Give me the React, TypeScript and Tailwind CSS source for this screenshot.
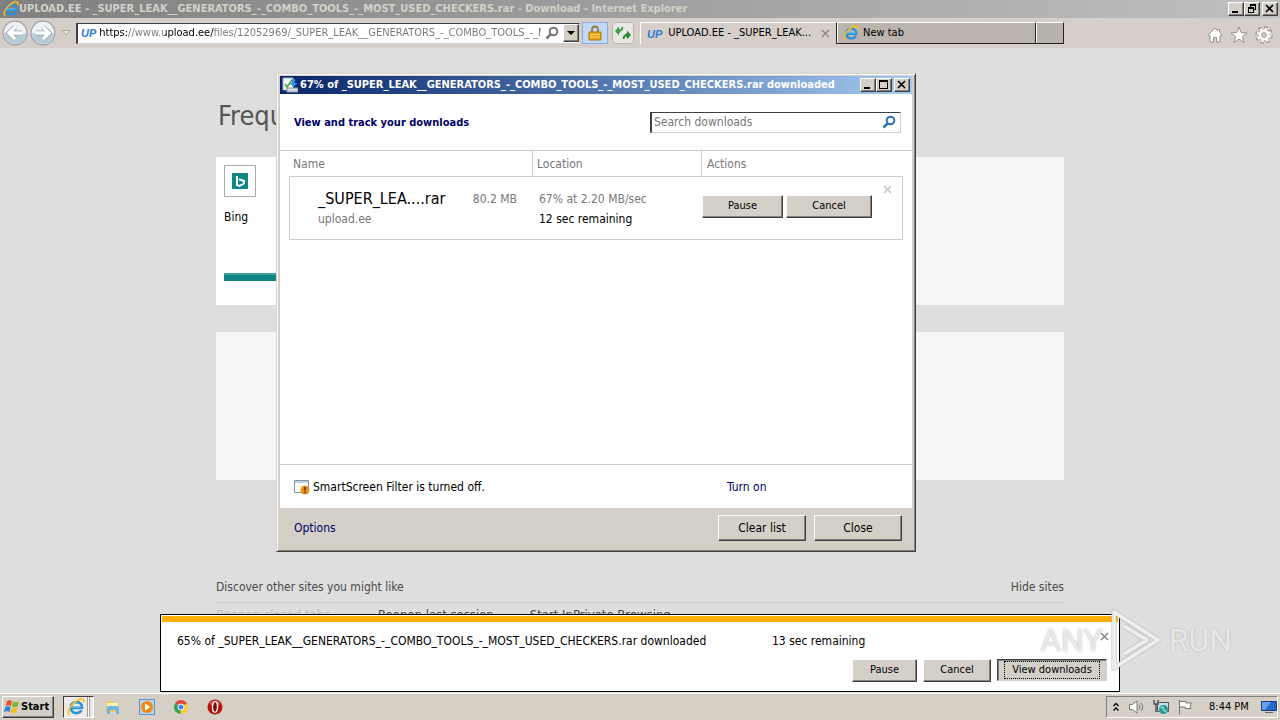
import { ReactNode } from "react";

const FILE_NAME = "_SUPER_LEAK__GENERATORS_-_COMBO_TOOLS_-_MOST_USED_CHECKERS.rar";

const raised =
  "border border-t-white border-l-white border-r-[#404040] border-b-[#404040] shadow-[inset_-1px_-1px_0_#808080] bg-[#d4d0c8]";

const IeIcon = ({ className = "size-4" }: { className?: string }) => (
  <svg viewBox="0 0 16 16" className={className} fill="none">
    <path
      d="M4.2 8.800h9.100c.2-3.200-1.800-5.200-4.900-5.200-3 0-5 2-5 4.900 0 3 2 4.900 5 4.900 2.100 0 3.600-.9 4.400-2.500"
      stroke="#2b92dc"
      strokeWidth="2.400"
    />
    <path d="M4.200 8h8" stroke="#6cc4f5" strokeWidth="1" />
    <path
      d="M2.400 14.600C.3 14.300.8 10.700 3.800 6.900 7 2.800 12.200-.2 14.300 1.200c.8.6.8 1.700.2 3"
      stroke="#f2c21b"
      strokeWidth="1.500"
    />
  </svg>
);

const UpIcon = () => (
  <span className="font-['Liberation_Sans'] text-[11px] font-bold italic leading-4 text-[#2a7bd6]">
    UP
  </span>
);

const MinimizeIcon = () => (
  <svg viewBox="0 0 12 10" className="h-2.5 w-3" shapeRendering="crispEdges">
    <path d="M2 7h6v2H2z" />
  </svg>
);

const MaximizeIcon = () => (
  <svg viewBox="0 0 12 10" className="h-2.5 w-3" shapeRendering="crispEdges">
    <path d="M1 0h9v9H1zM2 2v6h7V2z" fillRule="evenodd" />
  </svg>
);

const RestoreIcon = () => (
  <svg viewBox="0 0 12 10" className="h-2.5 w-3" shapeRendering="crispEdges">
    <path d="M4 0h6v6H8V5h1V2H5v1H4z" />
    <path d="M2 3h6v6H2zM3 5v3h4V5z" fillRule="evenodd" />
  </svg>
);

const CloseIcon = ({ className = "h-2.5 w-3" }: { className?: string }) => (
  <svg viewBox="0 0 12 10" className={className} stroke="currentColor" strokeWidth="1.600">
    <path d="M2 1l7 7M9 1L2 8" />
  </svg>
);

const WindowButton = ({ label, children }: { label: string; children: ReactNode }) => (
  <button
    aria-label={label}
    className={`flex h-3.5 w-4 items-center justify-center ${raised}`}
  >
    {children}
  </button>
);

const Button = ({ className, children }: { className: string; children: ReactNode }) => (
  <button className={`flex items-center justify-center ${raised} ${className}`}>
    {children}
  </button>
);

const NavButton = ({ label, flip }: { label: string; flip?: boolean }) => (
  <button aria-label={label}>
    <svg viewBox="0 0 28 28" className={`size-7 ${flip ? "-scale-x-100" : ""}`}>
      <circle cx="14" cy="14" r="12.500" fill="#9aa0a6" />
      <circle cx="14" cy="14" r="11.300" fill="#eef2f5" />
      <path d="M3 14a11 11 0 0 0 22 0q-11 4-22 0z" fill="#b7cad7" />
      <path
        d="M21 14H9M14 8l-6 6 6 6"
        fill="none"
        stroke="#8fa3b2"
        strokeWidth="5"
      />
      <path
        d="M21 14H9M14 8l-6 6 6 6"
        fill="none"
        stroke="#fff"
        strokeWidth="3.400"
      />
    </svg>
  </button>
);

const SearchIcon = ({ className }: { className: string }) => (
  <svg viewBox="0 0 14 14" className={className} fill="none" stroke="currentColor">
    <circle cx="8.500" cy="5.500" r="3.800" strokeWidth="2" />
    <path d="M5.800 8.200L1.500 12.500" strokeWidth="2.600" />
  </svg>
);

const TitleBar = () => (
  <header className="flex h-[18px] items-center justify-between bg-linear-to-r from-[#808080] to-[#c0c0c0] pl-[3px] pr-0.5">
    <div className="flex items-center">
      <IeIcon />
      <h1 className="whitespace-nowrap pt-px text-[11px] font-bold text-[#d4d0c8]">
        UPLOAD.EE - {FILE_NAME} - Download - Internet Explorer
      </h1>
    </div>
    <div className="flex">
      <WindowButton label="Minimize">
        <MinimizeIcon />
      </WindowButton>
      <WindowButton label="Restore">
        <RestoreIcon />
      </WindowButton>
      <span className="w-0.5" />
      <WindowButton label="Close">
        <CloseIcon />
      </WindowButton>
    </div>
  </header>
);

const Toolbar = () => (
  <nav className="flex h-[30px] items-center bg-[#d6cfc9] text-[11px]">
    <div className="flex w-[76px] items-center pl-px">
      <NavButton label="Back" />
      <NavButton label="Forward" flip />
      <button aria-label="Recent pages" className="pl-1">
        <svg viewBox="0 0 10 6" className="h-1.5 w-2.5">
          <path d="M1 .5h8L5 5z" fill="#e8e5e0" stroke="#aaa69e" />
        </svg>
      </button>
    </div>
    <div className="flex h-[21px] w-[504px] items-center border border-l-2 border-[#d4d0c8] border-t-[#404040] border-l-[#404040] bg-white pl-[3px]">
      <UpIcon />
      <input
        aria-label="Address"
        readOnly
        value="https://www.upload.ee/files/12052969/_SUPER_LEAK__GENERATORS_-_COMBO_TOOLS_-_MOST_USED_CHECKERS.rar.html"
        className="ml-[3px] min-w-0 flex-1 bg-[linear-gradient(90deg,#000_28px,#777_28px,#777_65px,#000_65px,#000_115px,#777_115px)] bg-clip-text text-[11px] text-transparent outline-none"
      />
      <button aria-label="Search" className="px-1 text-[#777]">
        <SearchIcon className="size-3.5" />
      </button>
      <button
        aria-label="Show address bar suggestions"
        className={`flex h-[18px] w-4 items-center justify-center ${raised}`}
      >
        <svg viewBox="0 0 8 4" className="h-1 w-2">
          <path d="M0 0h8L4 4z" />
        </svg>
      </button>
    </div>
    <button
      aria-label="Security report"
      className="ml-0.5 flex h-[22px] w-[26px] items-center justify-center border border-[#86aee0] bg-[#c3d9f5]"
    >
      <svg viewBox="0 0 14 16" className="h-4 w-3.5">
        <path d="M4 8V4.500a3 3 0 0 1 6 0V8" fill="none" stroke="#8e7a3c" strokeWidth="1.800" />
        <path d="M1 7h12v8H1z" fill="#e8a91c" stroke="#a97408" />
        <path d="M2 9.500h10M2 12h10" stroke="#ffd65c" />
      </svg>
    </button>
    <button
      aria-label="Refresh"
      className="ml-1 flex h-[22px] w-[22px] items-center justify-center rounded-sm border border-[#bab6b0] bg-[#e9e7e4]"
    >
      <svg viewBox="0 0 16 16" className="size-4" fill="none" strokeWidth="2">
        <path d="M0 6l4-4.500V4h1v4H4v2.500z" fill="#3f9a45" />
        <path d="M4 6q3 0 3.500-4" stroke="#3f9a45" />
        <path d="M16 10l-4 4.500V12h-1V8h1V5.500z" fill="#2c8a35" />
        <path d="M12 10q-3 0-3.500 4" stroke="#2c8a35" />
      </svg>
    </button>
    <div className="ml-1.5 flex h-[22px]">
      <div className="flex w-[196px] items-center border-l border-t border-white pl-1.5 pr-1">
        <UpIcon />
        <button className="ml-1.5 flex-1 truncate text-left">UPLOAD.EE - _SUPER_LEAK...</button>
        <button aria-label="Close tab" className="text-[#8c8c8c]">
          <CloseIcon />
        </button>
      </div>
      <button className="flex w-[200px] items-center border-x border-b border-t border-[#222] border-t-white bg-[#bab4ac] pl-1.5 shadow-[inset_1px_0_0_#fff]">
        <IeIcon />
        <span className="ml-1">New tab</span>
      </button>
      <button
        aria-label="Open new tab"
        className="w-7 border border-[#222] border-l-0 border-t-white bg-[#b8b3ac] shadow-[inset_1px_0_0_#fff]"
      />
    </div>
    <div className="ml-auto flex items-center gap-[7px] pr-[7px] pt-1">
      <button aria-label="Home">
        <svg viewBox="0 0 16 16" className="size-4" fill="#fff" stroke="#969089">
          <path d="M8 1L.8 8.300l1.300 1L3 8.600V15h3.500v-4.500h3V15H13V8.600l.9.700 1.300-1L12.500 5.500V2.500h-2v1z" />
        </svg>
      </button>
      <button aria-label="Favorites">
        <svg viewBox="0 0 18 18" className="size-[18px]" fill="#fff" stroke="#969089">
          <path d="M9 1l2.200 5.500 5.800.4-4.500 3.700 1.500 5.800L9 13.200l-5 3.200 1.500-5.800L1 6.900l5.800-.4z" />
        </svg>
      </button>
      <button aria-label="Tools">
        <svg viewBox="0 0 18 18" className="size-[18px]">
          <circle cx="9" cy="9" r="7" fill="none" stroke="#969089" strokeWidth="3.500" strokeDasharray="3 2.500" />
          <circle cx="9" cy="9" r="5" fill="#fff" stroke="#969089" strokeWidth="2.500" />
          <circle cx="9" cy="9" r="4.500" fill="none" stroke="#fff" strokeWidth="2" />
          <circle cx="9" cy="9" r="6.300" fill="none" stroke="#fff" strokeWidth="2.200" strokeDasharray="2.400 2.550" />
          <circle cx="9" cy="9" r="2.300" fill="#d6cfc9" stroke="#969089" />
        </svg>
      </button>
    </div>
  </nav>
);

const NewTabPage = () => (
  <main className="mx-auto w-[848px] max-w-full pt-[51px] text-xs text-[#4a4a4a]">
    <h2 className="w-[60px] overflow-hidden pl-0.5 text-[27px] leading-[34px] text-[#555]">
      Frequent
    </h2>
    <div className="mt-6 grid grid-cols-5 gap-[27px]">
      <a href="#bing" className="flex aspect-square flex-col bg-white pl-2 pt-2 text-black">
        <span className="flex size-8 items-center justify-center border border-[#aaa]">
          <svg viewBox="0 0 16 16" className="size-4">
            <path d="M0 0h16v16H0z" fill="#0f8784" />
            <path d="M5 3v9l2.500 1L12 10.500V8L7 6.300" fill="none" stroke="#fff" strokeWidth="2" />
          </svg>
        </span>
        <span className="mt-3">Bing</span>
        <span className="mb-6 mt-auto h-2 border-t-2 border-[#3ba39f] bg-[#0f8784]" />
      </a>
      {Array.from({ length: 9 }, (_, i) => (
        <div key={i} className="aspect-square bg-[#f6f6f6]" />
      ))}
    </div>
    <div className="mt-[98px] flex justify-between border-b border-[#cbcbcb] pb-1.5 leading-[18px]">
      <a href="#discover">Discover other sites you might like</a>
      <a href="#hide">Hide sites</a>
    </div>
    <div className="mt-[3px] flex gap-9 text-[13px] leading-[18px]">
      <span className="w-[126px] text-[#bbb]">Reopen closed tabs</span>
      <a href="#reopen">Reopen last session</a>
      <a href="#private">Start InPrivate Browsing</a>
    </div>
  </main>
);

const DownloadsDialog = () => (
  <section
    role="dialog"
    aria-label="View Downloads"
    className="absolute left-[276px] top-[25px] flex h-[479px] w-[640px] flex-col border border-[#d4d0c8] border-b-[#404040] border-r-[#404040] bg-[#d4d0c8] p-[3px] pt-0.5 shadow-[inset_1px_1px_0_#fff,inset_-1px_-1px_0_#808080]"
  >
    <div className="flex h-[18px] items-center justify-between bg-linear-to-r from-[#0a246a] to-[#a6caf0] px-0.5">
      <div className="flex items-center gap-0.5">
        <svg viewBox="0 0 16 16" className="size-4">
          <path d="M1 1h10v12H1z" fill="#f4f8f4" stroke="#9fb3c6" />
          <path d="M3 7l2 3 5-7" fill="none" stroke="#4aa84a" strokeWidth="1.600" />
          <path d="M10 2h3v4h2.500l-4 4-4-4H10z" fill="#2f8fe0" />
          <path d="M5 11h11v4H5z" fill="#d7dce0" stroke="#8895a0" />
        </svg>
        <h2 className="whitespace-nowrap text-[11px] font-bold text-white">
          67% of {FILE_NAME} downloaded
        </h2>
      </div>
      <div className="flex">
        <WindowButton label="Minimize">
          <MinimizeIcon />
        </WindowButton>
        <WindowButton label="Maximize">
          <MaximizeIcon />
        </WindowButton>
        <span className="w-0.5" />
        <WindowButton label="Close">
          <CloseIcon />
        </WindowButton>
      </div>
    </div>
    <div className="flex flex-1 flex-col bg-white text-xs">
      <div className="flex h-14 items-center justify-between pl-3.5 pr-[11px]">
        <h3 className="pt-0.5 text-[11px] font-bold text-[#000066]">
          View and track your downloads
        </h3>
        <label className="flex h-[21px] w-[251px] items-center border border-l-2 border-[#d4d0c8] border-l-[#404040] border-t-[#404040] pl-0.5 pr-1 text-[#2c6cb5]">
          <input
            aria-label="Search downloads"
            placeholder="Search downloads"
            className="min-w-0 flex-1 text-xs outline-none placeholder:text-[#777]"
          />
          <SearchIcon className="size-3.5" />
        </label>
      </div>
      <div className="border-t border-[#ccc] px-[9px]">
        <table className="w-full table-fixed border-separate border-spacing-0 text-left">
          <thead>
            <tr className="h-[25px] text-[#777] *:font-normal">
              <th className="w-[244px] border-r border-[#ccc] pl-1">Name</th>
              <th className="w-[169px] border-r border-[#ccc] pl-1">Location</th>
              <th className="pl-[5px]">Actions</th>
            </tr>
          </thead>
          <tbody>
            <tr className="h-16 *:border-y *:border-[#ccc]">
              <td className="border-l pl-7 pt-0.5">
                <div className="flex items-center justify-between pr-4">
                  <span className="text-base leading-5 text-black">_SUPER_LEA....rar</span>
                  <span className="text-[#777]">80.2 MB</span>
                </div>
                <div className="leading-5 text-[#777]">upload.ee</div>
              </td>
              <td className="pl-1.5 pt-0.5 leading-5">
                <div className="text-[#777]">67% at 2.20 MB/sec</div>
                <div>12 sec remaining</div>
              </td>
              <td className="border-r pb-1 pr-2">
                <div className="flex items-center gap-[3px] text-[11px]">
                  <Button className="h-[23px] w-[81px]">Pause</Button>
                  <Button className="h-[23px] w-[86px]">Cancel</Button>
                  <button aria-label="Remove" className="mb-8 ml-auto text-[#c4c4c4]">
                    <CloseIcon />
                  </button>
                </div>
              </td>
            </tr>
          </tbody>
        </table>
      </div>
      <div className="mt-auto flex h-11 items-center border-t border-[#ccc] pl-3.5">
        <svg viewBox="0 0 16 16" className="size-4">
          <path d="M.5 1.500h14v12H.5z" fill="#fff" stroke="#8a929a" />
          <path d="M1 2h13v2H1z" fill="#b9d5ee" />
          <circle cx="11" cy="11" r="4.500" fill="#e8921a" />
          <path d="M11 8v3.500M11 12.500V14" stroke="#5a3200" strokeWidth="1.600" />
        </svg>
        <span className="ml-[3px] w-[414px]">SmartScreen Filter is turned off.</span>
        <a href="#turn-on" className="text-[#000066]">
          Turn on
        </a>
      </div>
    </div>
    <div className="flex h-10 items-center gap-2 pl-3.5 pr-2.5 text-xs">
      <a href="#options" className="mr-auto text-[#000066]">
        Options
      </a>
      <Button className="h-[26px] w-[88px]">Clear list</Button>
      <Button className="h-[26px] w-[88px]">Close</Button>
    </div>
  </section>
);

const NotificationBar = () => (
  <section className="absolute inset-x-40 bottom-px flex h-[78px] flex-col border border-black bg-white">
    <div className="mx-px mt-px h-1.5 bg-[#ffae00]" />
    <div className="flex h-[37px] items-center pl-4 pr-2 text-xs">
      <span className="w-[595px] whitespace-nowrap">65% of {FILE_NAME} downloaded</span>
      <span>13 sec remaining</span>
      <button aria-label="Close notification" className="mb-2 ml-auto text-[#888]">
        <CloseIcon />
      </button>
    </div>
    <div className="flex justify-end gap-1.5 pr-3 text-[11px]">
      <Button className="h-[23px] w-[65px]">Pause</Button>
      <Button className="h-[23px] w-[68px]">Cancel</Button>
      <button className="flex h-[22px] w-[110px] border border-[#d4d0c8] border-l-[#404040] border-t-[#404040] bg-[#d4d0c8] px-1.5 py-px shadow-[inset_1px_1px_0_#808080]">
        <span className="flex h-full flex-1 items-center justify-center border border-dotted border-black">
          View downloads
        </span>
      </button>
    </div>
  </section>
);

const Watermark = () => (
  <div className="pointer-events-none absolute bottom-5 right-12 flex items-center gap-1.5 font-[Roboto,sans-serif] text-[32px] leading-none text-white/70 [text-shadow:0_0_2px_#aaa]">
    <span>ANY</span>
    <svg viewBox="0 0 54 66" className="h-[66px] w-[54px]" fill="none" strokeLinejoin="round">
      <path d="M5 5v56l44-28zM15 19l23 14-23 14" stroke="#bbb" strokeOpacity=".5" strokeWidth="6" />
      <path d="M5 5v56l44-28zM15 19l23 14-23 14" stroke="#eee" strokeWidth="3.500" />
    </svg>
    <span>RUN</span>
  </div>
);

const Taskbar = () => (
  <footer className="flex h-[27px] items-center border-t border-white bg-[#d6cfc6] px-0.5 text-[11px]">
    <button className={`flex h-[22px] w-[52px] items-center gap-px pl-px font-bold ${raised}`}>
      <svg viewBox="0 0 16 16" className="size-4 shrink-0">
        <path d="M3 2q3-1.500 5 0L7 7Q4.500 5.500 1.500 7z" fill="#e8542a" />
        <path d="M9 2.500q3 1.500 6 0L13.500 7.500q-3 1.500-5.500 0z" fill="#7db92f" />
        <path d="M1.300 8q3-1.500 5.300 0l-1.200 5Q3 11.500 0 13z" fill="#2f86d6" />
        <path d="M7.800 8.500q3 1.500 5.500 0L12 13.500q-3 1.500-5.500 0z" fill="#f5bb22" />
      </svg>
      Start
    </button>
    <button
      aria-label="Internet Explorer"
      className="ml-[9px] flex h-[22px] w-[31px] items-center border border-white border-l-[#404040] border-t-[#404040] bg-[#edeae6]"
    >
      <IeIcon className="ml-[3px] size-[18px]" />
      <span className="ml-0.5 h-full w-[3px] border-x border-[#a09c96] bg-white" />
    </button>
    <div className="ml-[11px] flex gap-[18px]">
      <button aria-label="Windows Explorer">
        <svg viewBox="0 0 16 16" className="size-4">
          <path d="M1 2h5l1 1.500h7V13H1z" fill="#e9c95c" />
          <path d="M2 4h11v3H2z" fill="#fff4bd" />
          <path d="M2 15V9q0-2 2-2h8q2 0 2 2v6h-3v-4H5v4z" fill="#72b5e4" />
        </svg>
      </button>
      <button aria-label="Media Player">
        <svg viewBox="0 0 16 16" className="size-4">
          <path d="M.5.500h15v15H.5z" fill="#b8d4ee" stroke="#5d94c8" />
          <circle cx="8" cy="8" r="6" fill="#f08a12" />
          <path d="M6 4.500v7L11.500 8z" fill="#fff" />
        </svg>
      </button>
      <button aria-label="Chrome">
        <svg viewBox="0 0 16 16" className="size-4">
          <path d="M8 8L2 4.300a7 7 0 0 1 12 .2z" fill="#dd4b3e" />
          <path d="M8 8l6-3.500A7 7 0 0 1 7.500 15z" fill="#fccd34" />
          <path d="M8 8l-.5 7A7 7 0 0 1 2 4.300z" fill="#33a457" />
          <circle cx="8" cy="8" r="3.300" fill="#fff" />
          <circle cx="8" cy="8" r="2.500" fill="#4484ef" />
        </svg>
      </button>
      <button aria-label="Opera">
        <svg viewBox="0 0 16 16" className="size-4">
          <circle cx="8" cy="8" r="7.500" fill="#b8120f" />
          <ellipse cx="8" cy="4.500" rx="5" ry="3" fill="#de5a50" />
          <ellipse cx="8" cy="8" rx="2.500" ry="5.300" fill="#7c0b09" stroke="#fff" strokeWidth="1.300" />
        </svg>
      </button>
    </div>
    <div className="ml-auto flex h-[22px] w-[172px] items-center border border-white border-l-[#808080] border-t-[#808080] pl-1.5">
      <svg viewBox="0 0 6 10" className="h-2.5 w-1.5" fill="none" stroke="#000" strokeWidth="1.300">
        <path d="M.5 4L3 1.500 5.500 4M.5 8.500L3 6l2.500 2.500" />
      </svg>
      <svg viewBox="0 0 16 16" className="ml-2.5 size-4" stroke="#777">
        <path d="M.5 5.500h3L8 2v12l-4.500-3.500h-3z" fill="#fff" />
        <path d="M10 5.500q2 2.500 0 5M12 4q3.500 4 0 8" fill="none" />
      </svg>
      <svg viewBox="0 0 16 16" className="ml-2 size-4">
        <path d="M4.500 3.500h11v9h-11z" fill="#bfe0ea" stroke="#555" />
        <path d="M1 1v4h4V1M3 5v8" fill="none" stroke="#555" strokeWidth="1.500" />
        <circle cx="10.500" cy="10.500" r="4.500" fill="#2b97a6" />
        <path d="M7.500 9q3-2 3 1t3 2" fill="none" stroke="#8fe0a0" strokeWidth="1.500" />
      </svg>
      <svg viewBox="0 0 16 16" className="ml-2 size-4">
        <path d="M2.500 1v14.500M3 2.500h6v1.500h5.500L13 7l1 2.500H8.500V8H3" fill="#fff" stroke="#777" />
      </svg>
      <span className="ml-4 whitespace-nowrap">8:44 PM</span>
      <svg viewBox="0 0 16 14" className="ml-auto h-3.5 w-4">
        <path d="M.5 1.500h15v9H.5z" fill="#2667c9" stroke="#173c7a" />
        <path d="M1 2h9L4 10H1z" fill="#659cec" />
        <path d="M4 12h8v1H4z" fill="#596a80" />
      </svg>
    </div>
  </footer>
);

export default function App() {
  return (
    <div className="flex h-screen flex-col overflow-hidden bg-[#dedede] font-['DejaVu_Sans_Condensed','Noto_Sans',sans-serif] text-black">
      <TitleBar />
      <Toolbar />
      <div className="relative min-h-0 flex-1">
        <NewTabPage />
        <DownloadsDialog />
        <NotificationBar />
        <Watermark />
      </div>
      <Taskbar />
    </div>
  );
}
